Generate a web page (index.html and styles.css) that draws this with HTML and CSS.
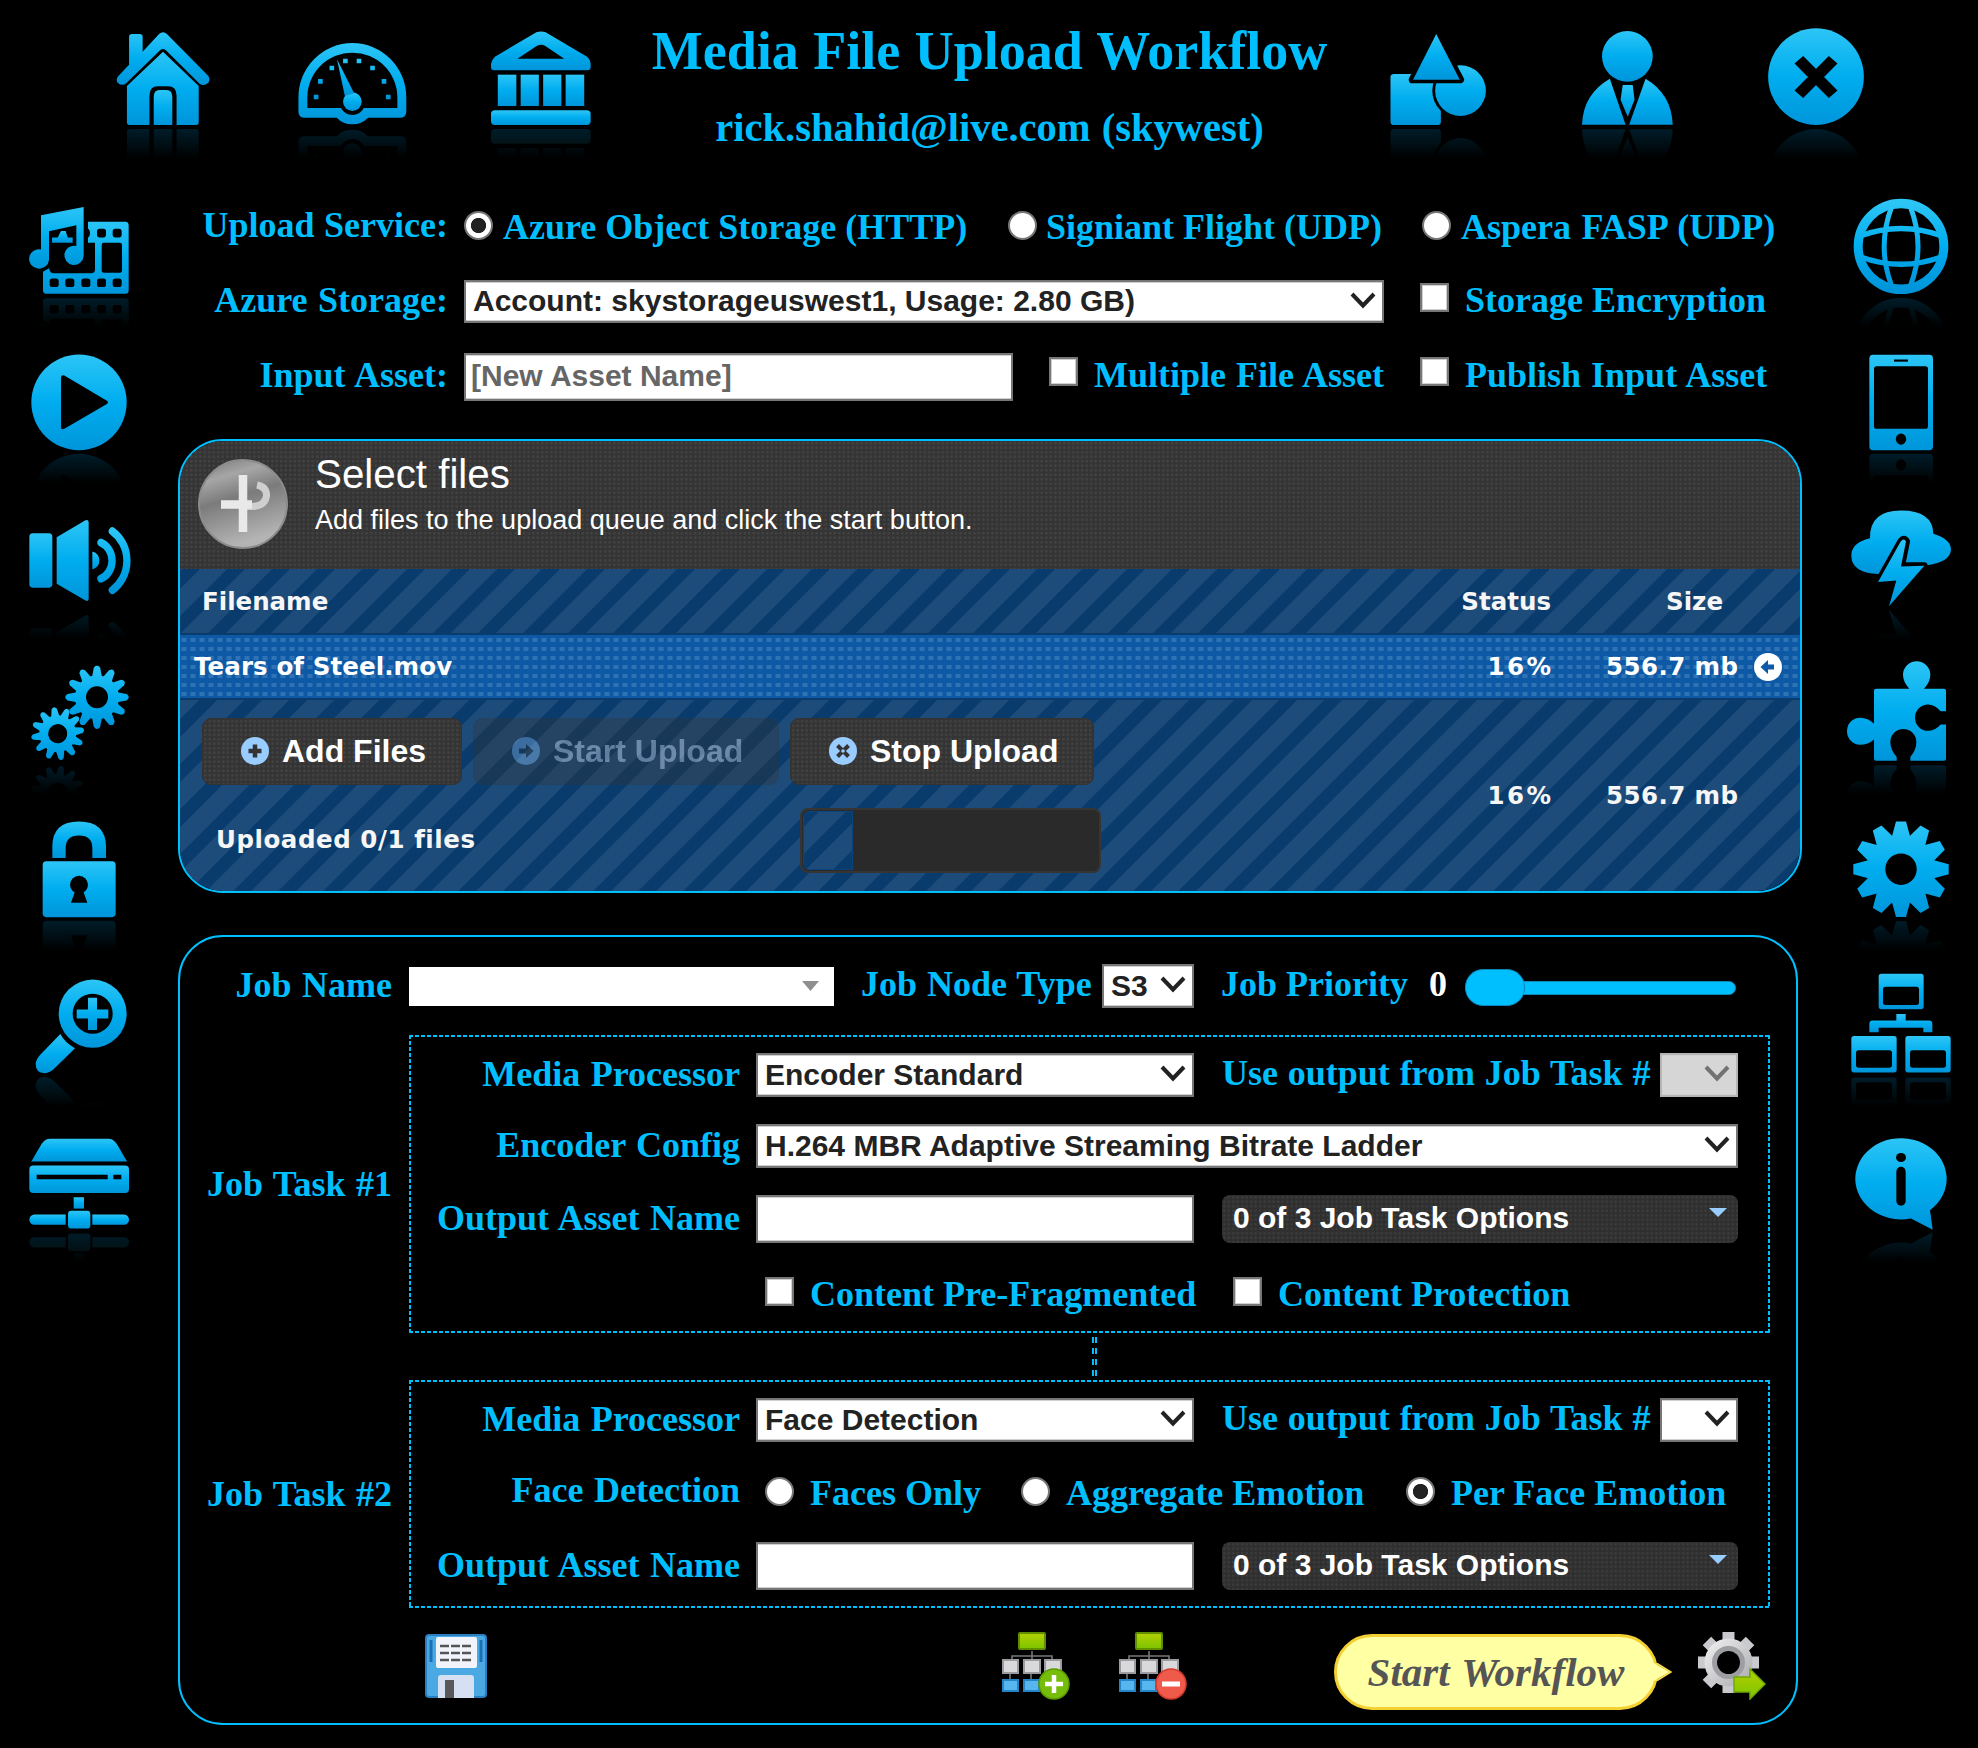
FILE: index.html
```html
<!DOCTYPE html>
<html lang="en">
<head>
<meta charset="utf-8">
<title>Media File Upload Workflow</title>
<link rel="stylesheet" href="styles.css">
</head>
<body>
<svg class="defs" width="0" height="0" aria-hidden="true">
  <defs>
    <linearGradient id="sky" x1="0" y1="0" x2="0" y2="1"><stop offset="0" stop-color="#2cc5f6"/><stop offset=".5" stop-color="#00adef"/><stop offset="1" stop-color="#0095da"/></linearGradient>
    <linearGradient id="steel" x1="0" y1="0" x2="1" y2="1"><stop offset="0" stop-color="#f2f2f2"/><stop offset="1" stop-color="#a9a9ad"/></linearGradient>
    <linearGradient id="lime" x1="0" y1="0" x2="0" y2="1"><stop offset="0" stop-color="#b4d000"/><stop offset="1" stop-color="#7cc400"/></linearGradient>
    <polygon id="spoke" points="-5,-47.7 5,-47.7 9,-33 9,33 5,47.7 -5,47.7 -9,33 -9,-33"/>
    <g id="spokes">
      <use href="#spoke"/><use href="#spoke" transform="rotate(30)"/><use href="#spoke" transform="rotate(60)"/><use href="#spoke" transform="rotate(90)"/><use href="#spoke" transform="rotate(120)"/><use href="#spoke" transform="rotate(150)"/>
    </g>
    <path id="cog" d="M-3.2 -29.5 Q0 -34 3.2 -29.5 L5 -20 V20 L3.2 29.5 Q0 34 -3.2 29.5 L-5 20 V-20Z"/>
    <g id="cogs">
      <use href="#cog"/><use href="#cog" transform="rotate(30)"/><use href="#cog" transform="rotate(60)"/><use href="#cog" transform="rotate(90)"/><use href="#cog" transform="rotate(120)"/><use href="#cog" transform="rotate(150)"/>
      <circle r="22"/>
    </g>
    <mask id="gear-mask" maskUnits="userSpaceOnUse" x="0" y="0" width="110" height="110">
      <g transform="translate(55 60.2)" fill="#fff"><use href="#spokes"/><circle r="34"/><circle r="15.7" fill="#000"/></g>
    </mask>
    <mask id="cog-big" maskUnits="userSpaceOnUse" x="0" y="0" width="110" height="110">
      <g transform="translate(73 44.3)" fill="#fff"><use href="#cogs"/><circle r="11" fill="#000"/></g>
    </mask>
    <mask id="cog-small" maskUnits="userSpaceOnUse" x="0" y="0" width="110" height="110">
      <g transform="translate(33.7 80.7) rotate(-8) scale(.84)" fill="#fff"><use href="#cogs"/><circle r="11.4" fill="#000"/></g>
    </mask>
    <symbol id="chevron" viewBox="0 0 26 18"><path d="M2 2 L13 13.5 L24 2" fill="none" stroke="#222" stroke-width="4"/></symbol>
    <symbol id="flow" viewBox="0 0 68 68">
      <path d="M30 19v6M10 28v-4H50v4M30 24v5" fill="none" stroke="#777" stroke-width="1.6"/>
      <path d="M8 42v6M29 42v6" stroke="#777" stroke-width="1.6"/>
      <rect x="17" y="1" width="26" height="16" rx="1" fill="url(#lime)" stroke="#5f8f00" stroke-width="2"/>
      <g fill="#d9d9dc" stroke="#9c9ca0" stroke-width="2"><rect x="1" y="28" width="15" height="13"/><rect x="22" y="28" width="16" height="13"/><rect x="43" y="28" width="16" height="13"/></g>
      <g fill="#58b6ee" stroke="#2484c8" stroke-width="2"><rect x="1" y="48" width="15" height="11"/><rect x="22" y="48" width="15" height="11"/></g>
    </symbol>
  </defs>
</svg>

<header class="masthead">
  <a class="nav-icon"><svg class="glyph" viewBox="51 49 308 330" preserveAspectRatio="none" fill="url(#sky)"><path d="M110 108q0-8 8-8h22q8 0 8 8v45l46-53q11-11 22 0l116 126q6 10 0 20-12 12-24 4L216 152q-11-14-22 0l-92 96q-12 10-24-2-6-10 2-20l30-34z"/><path d="M205 153 305 256V366q0 7-7 7H243V285q0-28-24-28h-28q-24 0-24 28V373H111q-7 0-7-7V256z"/><path d="M179 373V290q0-22 16-22h20q16 0 16 22v83z"/></svg></a>
  <a class="nav-icon"><svg class="glyph" viewBox="579 49 308 330" preserveAspectRatio="none" fill="url(#sky)"><path fill-rule="evenodd" d="M583 290A151 163 0 0 1 885 290V333q0 18-18 18H778Q760 371 734 371T690 351H601q-18 0-18-18zM608 322V290A126 134 0 0 1 860 290V322H766Q755 343 734 343T702 322z"/><ellipse cx="734" cy="303" rx="26" ry="28"/><path d="M691 176 739 278 713 286z"/><path d="M626 282h13v14h-13zM638 235h13v14h-13zM670 195h13v14h-13zM708 174h13v14h-13zM746 174h13v14h-13zM784 195h13v14h-13zM816 235h13v14h-13zM828 282h13v14h-13z"/></svg></a>
  <a class="nav-icon"><svg class="glyph" viewBox="1109 49 308 330" preserveAspectRatio="none" fill="url(#sky)"><path fill-rule="evenodd" d="M1250 95q13-5 26 0l116 73q10 10 10 22v10q0 9-9 9H1132q-9 0-9-9V190q1-12 11-22zM1252 135q11-6 22 0l54 39H1197z"/><rect x="1142" y="222" width="52" height="94"/><rect x="1206" y="222" width="51" height="94"/><rect x="1269" y="222" width="51" height="94"/><rect x="1332" y="222" width="52" height="94"/><rect x="1123" y="329" width="279" height="44" rx="11"/></svg></a>
  <div class="titles">
    <h1>Media File Upload Workflow</h1>
    <h2>rick.shahid@live.com (skywest)</h2>
  </div>
  <a class="nav-icon"><svg class="glyph" viewBox="64 49 308 330" preserveAspectRatio="none" fill="url(#sky)"><rect x="85" y="220" width="141" height="153" rx="10"/><ellipse cx="281" cy="270" rx="79" ry="84" fill="#000"/><ellipse cx="281" cy="270" rx="71" ry="76"/><path d="M213 100 280 237H147z" fill="#000" stroke="#000" stroke-width="22" stroke-linejoin="round"/><path d="M213 100 279 237H148z"/></svg></a>
  <a class="nav-icon"><svg class="glyph" viewBox="593 49 308 330" preserveAspectRatio="none" fill="url(#sky)"><ellipse cx="748" cy="167" rx="71" ry="76"/><path d="M699 234 743 372H621Q624 280 699 234z"/><path d="M799 234 753 372H875Q872 280 799 234z"/><path d="M735 253H763L768 297 749 348 729 297z"/></svg></a>
  <a class="nav-icon"><svg class="glyph" viewBox="1123 49 308 330" preserveAspectRatio="none" fill="url(#sky)"><ellipse cx="1277" cy="228" rx="134" ry="145"/><path d="M1229 177 1325 281M1325 177 1229 281" stroke="#000" stroke-width="33"/></svg></a>
</header>

<div class="layout">
  <nav class="rail">
    <a class="nav-icon"><svg class="glyph" viewBox="72 -12 330 308" preserveAspectRatio="none" fill="url(#sky)"><path fill-rule="evenodd" d="M264 88H376q10 0 10 10V280q0 10-10 10H139q-10 0-10-10V228l18-10q3 14 13 14H275q10 0 10-10V147H264v-14q6-3 6-13t-6-13zM311 147q-6 0-6 6v72q0 6 6 6h49q6 0 6-6v-72q0-6-6-6z"/><path d="M156 132H173L183 114H197L203 132H218V147H156z"/><path d="M123 70 251 47V184A29 27 0 1 1 229 156V98L147 115V195A30 27 0 1 1 123 166z"/><g fill="#000"><rect x="149" y="247" width="27" height="24" rx="8"/><rect x="196" y="247" width="27" height="24" rx="8"/><rect x="244" y="247" width="27" height="24" rx="8"/><rect x="291" y="247" width="27" height="24" rx="8"/><rect x="338" y="247" width="27" height="24" rx="8"/><rect x="291" y="108" width="27" height="24" rx="8"/><rect x="338" y="108" width="27" height="24" rx="8"/></g></svg></a>
    <a class="nav-icon"><svg class="glyph" viewBox="72 425 330 308" preserveAspectRatio="none" fill="url(#sky)"><ellipse cx="237" cy="594" rx="143" ry="134"/><path fill="#000" d="M183 525q0-9 10-6l129 71q4 4 0 8l-129 70q-10 4-10-5z"/></svg></a>
    <a class="nav-icon"><svg class="glyph" viewBox="72 862 330 308" preserveAspectRatio="none" fill="url(#sky)"><rect x="88" y="961" width="69" height="152" rx="10"/><path d="M170 972 255 925q11-4 11 7V1143q0 11-11 5L170 1102z"/><path d="M277 1012q21 6 21 25t-21 25z"/><path d="M303 987A55 55 0 0 1 303 1088M337 955A99.700 99.700 0 0 1 337 1120" fill="none" stroke="url(#sky)" stroke-width="22" stroke-linecap="round"/></svg></a>
    <a class="nav-icon"><svg class="glyph" viewBox="0 0 110 110"><rect x="7" y="54" width="53.400" height="53.400" fill="url(#sky)" mask="url(#cog-small)"/><rect x="41" y="12.500" width="64" height="64" fill="url(#sky)" mask="url(#cog-big)"/></svg></a>
    <a class="nav-icon"><svg class="glyph" viewBox="72 201 330 319.400" preserveAspectRatio="none" fill="url(#sky)"><path d="M157 343V310Q157 237 237 237T318 310V343H277V315Q277 278 237 278T197 315V343z"/><rect x="128" y="353" width="219" height="162" rx="11"/><g fill="#000"><ellipse cx="237" cy="421" rx="27" ry="26"/><path d="M226 438 213 473H262L249 438z"/></g></svg></a>
    <a class="nav-icon"><svg class="glyph" viewBox="72 653.600 330 319.400" preserveAspectRatio="none" fill="url(#sky)"><ellipse cx="278" cy="795" rx="102" ry="99"/><ellipse cx="278" cy="795" rx="60" ry="58" fill="#000"/><path d="M264 749h27v34h34v26h-34v33h-27v-33h-34v-26h34z"/><path d="M181 854Q195 880 225 895L160 957Q145 968 133 968 107 966 107 940 108 928 120 915z"/></svg></a>
    <a class="nav-icon"><svg class="glyph" viewBox="72 1105.600 330 319.400" preserveAspectRatio="none" fill="url(#sky)"><path d="M94 1223 125 1172Q135 1157 150 1157H325Q340 1157 350 1172L381 1223z"/><rect x="88" y="1235" width="299" height="80" rx="12"/><rect x="221" y="1327" width="31" height="33"/><rect x="204" y="1366" width="67" height="52" rx="10"/><path d="M197 1377H103a15 15 0 0 0 0 30H197z"/><path d="M277 1377H372a15 15 0 0 1 0 30H277z"/><path fill="#000" d="M110 1262H323V1275H110zM340 1262H364V1275H340z"/></svg></a>
  </nav>

  <main class="content">
    <form class="settings">
      <div class="row">
        <span class="label service">Upload Service:</span>
        <label class="option opt-azure"><input type="radio" name="service" checked><span>Azure Object Storage (HTTP)</span></label>
        <label class="option opt-signiant"><input type="radio" name="service"><span>Signiant Flight (UDP)</span></label>
        <label class="option opt-aspera"><input type="radio" name="service"><span>Aspera FASP (UDP)</span></label>
      </div>
      <div class="row row-storage">
        <span class="label">Azure Storage:</span>
        <div class="select storage">Account: skystorageuswest1, Usage: 2.80 GB)<svg><use href="#chevron"/></svg></div>
        <label class="check"><input type="checkbox"><span>Storage Encryption</span></label>
      </div>
      <div class="row row-asset">
        <span class="label">Input Asset:</span>
        <input class="field asset" type="text" placeholder="[New Asset Name]">
        <label class="check"><input type="checkbox"><span>Multiple File Asset</span></label>
        <label class="check last"><input type="checkbox"><span>Publish Input Asset</span></label>
      </div>
    </form>

    <section class="uploader">
      <div class="up-head">
        <svg class="up-logo" viewBox="0 0 90 90">
          <defs><linearGradient id="disc" x1="0" y1="0" x2=".3" y2="1"><stop offset="0" stop-color="#777"/><stop offset=".25" stop-color="#a6a6a6"/><stop offset=".5" stop-color="#7b7b7b"/><stop offset="1" stop-color="#b4b4b4"/></linearGradient></defs>
          <circle cx="45" cy="45" r="44" fill="url(#disc)" stroke="#8c8c8c" stroke-width="2"/>
          <path d="M59 26Q69 28 68.500 37 67 47 54 47.500H45" fill="none" stroke="#cfcfcf" stroke-width="7"/>
          <path d="M45 16V73M23 45.500H54" fill="none" stroke="#e9e9e9" stroke-width="8.500"/>
        </svg>
        <div><h3>Select files</h3><p>Add files to the upload queue and click the start button.</p></div>
      </div>
      <div class="up-row up-columns"><span>Filename</span><span class="num">Status</span><span class="num size">Size</span></div>
      <div class="up-row up-file"><span>Tears of Steel.mov</span><span class="num percent">16%</span><span class="num amount">556.7 mb</span>
        <svg class="badge" viewBox="0 0 28 28"><circle cx="14" cy="14" r="14" fill="#fff"/><path d="M6.500 14 14 7v4.500h6v5h-6V21z" fill="#0d5aa7"/></svg>
      </div>
      <div class="up-row up-foot">
        <div class="up-actions">
          <div class="buttons">
            <button type="button" class="btn add"><svg viewBox="0 0 28 28"><circle cx="14" cy="14" r="14" fill="#9cf"/><path d="M14 7.500v13M7.500 14h13" stroke="#333" stroke-width="4.500"/></svg>Add Files</button>
            <button type="button" class="btn start"><svg viewBox="0 0 28 28"><circle cx="14" cy="14" r="14" fill="#9cf"/><path d="M21.500 14 14 7v4.500H7v5h7V21z" fill="#333"/></svg>Start Upload</button>
            <button type="button" class="btn stop"><svg viewBox="0 0 28 28"><circle cx="14" cy="14" r="14" fill="#9cf"/><path d="M8.500 8.500l11 11M19.500 8.500l-11 11" stroke="#333" stroke-width="4"/><circle cx="14" cy="14" r="1.800" fill="#9cf"/></svg>Stop Upload</button>
          </div>
          <div class="progress-line"><span class="uploaded">Uploaded 0/1 files</span><div class="progress"><div class="bar" style="width:17%"></div></div></div>
        </div>
        <span class="num percent">16%</span><span class="num amount">556.7 mb</span>
      </div>
    </section>

    <section class="job">
      <div class="job-row">
        <span class="label name">Job Name</span>
        <div class="combo"><svg viewBox="0 0 17 10"><path d="M0 0H17L8.500 10z" fill="#8f8f8f"/></svg></div>
        <span class="node-type">Job Node Type</span>
        <div class="select node">S3<svg><use href="#chevron"/></svg></div>
        <span class="priority">Job Priority</span><span class="priority-value">0</span>
        <div class="slider"><div class="track"></div><div class="handle"></div></div>
      </div>

      <div class="task">
        <span class="label name">Job Task #1</span>
        <div class="task-box">
          <div class="row">
            <span class="label">Media Processor</span>
            <div class="select wide">Encoder Standard<svg><use href="#chevron"/></svg></div>
            <span class="use-output">Use output from Job Task #</span>
            <div class="select source disabled"><svg><use href="#chevron"/></svg></div>
          </div>
          <div class="row encoder">
            <span class="label">Encoder Config</span>
            <div class="select full">H.264 MBR Adaptive Streaming Bitrate Ladder<svg><use href="#chevron"/></svg></div>
          </div>
          <div class="row output">
            <span class="label">Output Asset Name</span>
            <input class="field wide" type="text">
            <div class="multi">0 of 3 Job Task Options<svg viewBox="0 0 18 9"><path d="M0 0H18L9 9z" fill="#9cf"/></svg></div>
          </div>
          <div class="row flags">
            <label class="check fragmented"><input type="checkbox"><span>Content Pre-Fragmented</span></label>
            <label class="check"><input type="checkbox"><span>Content Protection</span></label>
          </div>
        </div>
      </div>
      <div class="link"></div>
      <div class="task second">
        <span class="label name">Job Task #2</span>
        <div class="task-box">
          <div class="row">
            <span class="label">Media Processor</span>
            <div class="select wide">Face Detection<svg><use href="#chevron"/></svg></div>
            <span class="use-output">Use output from Job Task #</span>
            <div class="select source"><svg><use href="#chevron"/></svg></div>
          </div>
          <div class="row faces">
            <span class="label">Face Detection</span>
            <label class="option faces-only"><input type="radio" name="faces"><span>Faces Only</span></label>
            <label class="option aggregate"><input type="radio" name="faces"><span>Aggregate Emotion</span></label>
            <label class="option"><input type="radio" name="faces" checked><span>Per Face Emotion</span></label>
          </div>
          <div class="row output">
            <span class="label">Output Asset Name</span>
            <input class="field wide" type="text">
            <div class="multi">0 of 3 Job Task Options<svg viewBox="0 0 18 9"><path d="M0 0H18L9 9z" fill="#9cf"/></svg></div>
          </div>
        </div>
      </div>

      <div class="toolbar">
        <svg class="save" viewBox="0 0 62 64">
          <rect x="1" y="1" width="60" height="62" rx="3" fill="#4aa8e2" stroke="#2a7fc0" stroke-width="2"/>
          <path d="M6 6V28M56 6V28" stroke="#1c6fb5" stroke-width="3"/>
          <rect x="11" y="3" width="41" height="31" rx="2" fill="#f1f4fa"/>
          <path d="M15 12H47M15 19H47M15 26H47" stroke="#555" stroke-width="2.500" stroke-dasharray="9 2"/>
          <path d="M13 64V44q0-3 3-3H46q3 0 3 3V64z" fill="#d5e0f3"/><path d="M20 64V46H29V64z" fill="#56585c"/>
        </svg>
        <svg class="task-add" viewBox="0 0 68 68"><use href="#flow"/><circle cx="52" cy="52" r="15" fill="#76bd0b" stroke="#5a9a00" stroke-width="1.500"/><path d="M52 43v18M43 52h18" stroke="#fff" stroke-width="4.500"/></svg>
        <svg class="task-remove" viewBox="0 0 68 68"><use href="#flow"/><circle cx="52" cy="52" r="15" fill="#f05a4a" stroke="#d43a2c" stroke-width="1.500"/><path d="M43 52h18" stroke="#fff" stroke-width="5"/></svg>
        <div class="hint">Start Workflow<svg viewBox="0 0 18 18"><path d="M0 0 16 9 0 18z" fill="#ffffa3"/><path d="M2 0 16.500 9 2 18" fill="none" stroke="#f7dc4e" stroke-width="2"/></svg></div>
        <svg class="run" viewBox="0 0 68 68">
          <g transform="translate(30.500 30.500)"><g stroke="#c9cacd" stroke-width="12"><path d="M0-30.500V30.500M-30.500 0H30.500"/><path transform="rotate(45)" d="M0-30.500V30.500M-30.500 0H30.500"/></g><circle r="24" fill="url(#steel)"/><circle r="14" fill="none" stroke="#9d9ea2" stroke-width="5"/><circle r="11.500" fill="#000"/></g>
          <path d="M36 45H52V37L67 52 52 67V60H36z" fill="url(#lime)" stroke="#6fa800" stroke-width="1.500"/>
        </svg>
      </div>
    </section>
  </main>

  <nav class="rail right">
    <a class="nav-icon"><svg class="glyph" viewBox="108 17 330 308" preserveAspectRatio="none" fill="none" stroke="url(#sky)"><ellipse cx="273" cy="186" rx="128.500" ry="120" stroke-width="27"/><path d="M245 75Q200 186 245 297M301 75Q347 186 301 297M150 157Q273 115 396 157M150 215Q273 257 396 215" stroke-width="15"/></svg></a>
    <a class="nav-icon"><svg class="glyph" viewBox="108 454 330 308" preserveAspectRatio="none" fill="url(#sky)"><rect x="178" y="490" width="191" height="267" rx="11"/><g fill="#000"><rect x="192" y="522" width="162" height="175" rx="8"/><rect x="252" y="503" width="42" height="6"/><circle cx="273" cy="726" r="15.500"/></g></svg></a>
    <a class="nav-icon"><svg class="glyph" viewBox="108 890 330 308" preserveAspectRatio="none" fill="url(#sky)"><path d="M180 1003Q178 925 273 925T370 990Q423 1005 423 1035 420 1070 352 1078L205 1103Q124 1100 124 1052 124 1015 180 1003z"/><path d="M272 1012Q282 1000 290 1012L275 1080H343L237 1193 259 1121 204 1125z" stroke="#000" stroke-width="20" stroke-linejoin="round" fill="#000"/><path d="M272 1012Q282 1000 288 1012L273 1082 343 1080 237 1193 259 1121 204 1125z"/></svg></a>
    <a class="nav-icon"><svg class="glyph" viewBox="108 1324 330 308" preserveAspectRatio="none" fill="url(#sky)"><path d="M192 1430q0-6 6-6H298Q279 1405 279 1385A41 38 0 1 1 361 1385Q361 1405 342 1424H402q6 0 6 6V1487H392Q375 1468 354 1468A39 37 0 1 0 354 1542Q375 1542 392 1524H408V1620q0 6-6 6H301V1615Q319 1595 319 1573A39 36 0 1 0 241 1573Q241 1595 260 1615V1626H198q-6 0-6-6V1566Q175 1581 150 1581A39 38 0 1 1 150 1505Q175 1505 192 1522z"/></svg></a>
    <a class="nav-icon"><svg class="glyph" viewBox="0 0 110 110"><rect x="7" y="12" width="96" height="96" fill="url(#sky)" mask="url(#gear-mask)"/></svg></a>
    <a class="nav-icon"><svg class="glyph" viewBox="108 653.600 330 319.400" preserveAspectRatio="none" fill="url(#sky)"><rect x="206" y="679" width="135" height="103" rx="8"/><path d="M259 796h28v19h70q10 0 10 10v24h-27v-13H206v13h-28v-24q0-10 10-10h71z"/><rect x="124" y="860" width="136" height="106" rx="8"/><rect x="286" y="860" width="136" height="106" rx="8"/><g fill="#000"><rect x="219" y="717" width="108" height="53" rx="8"/><rect x="138" y="901" width="108" height="51" rx="8"/><rect x="300" y="901" width="108" height="51" rx="8"/></g></svg></a>
    <a class="nav-icon"><svg class="glyph" viewBox="108 1107 330 319.400" preserveAspectRatio="none" fill="url(#sky)"><path d="M360 1366A137 118 0 1 0 303 1390L368 1423z"/><g fill="#000"><ellipse cx="273" cy="1213" rx="15" ry="13"/><rect x="259" y="1240" width="28" height="113" rx="14"/></g></svg></a>
  </nav>
</div>
</body>
</html>
```

FILE: styles.css
```css
* { box-sizing: border-box; }

body {
  margin: 0;
  width: 1978px;
  height: 1748px;
  overflow: hidden;
  background: #000;
  color: #00bfff;
  font: bold 36px/40px "Liberation Serif", serif;
  white-space: nowrap;
}

h1, h2, h3, p { margin: 0; }
svg { display: block; flex: none; }
.defs { position: absolute; }

/* Header and icon rails */
.masthead {
  display: grid;
  grid-template-columns: repeat(3, 189px) 1fr repeat(3, 189px);
  height: 155px;
  padding: 0 67.5px 0 68.5px;
}
.masthead .nav-icon { height: 127px; }
.titles { text-align: center; padding-top: 21px; }
h1 { font-size: 54px; line-height: 60px; word-spacing: 1px; }
h2 { font-size: 40.5px; line-height: 46px; margin-top: 24px; word-spacing: 1px; }

.nav-icon { display: flex; justify-content: center; align-items: flex-end; }
.glyph {
  width: 110px;
  height: 110px;
  -webkit-box-reflect: below 0 linear-gradient(to top, rgba(0, 0, 0, .2), transparent 31px);
}

.layout { display: flex; }
.rail { width: 158px; flex: none; }
.rail.right { width: 154px; }
.rail .nav-icon { height: 155.8px; }
.rail .nav-icon:first-child { height: 141px; }
.content { width: 1624px; margin: 0 22px 0 20px; flex: none; }

/* Form primitives */
.row { display: flex; align-items: center; height: 50px; }
.label { width: 270px; text-align: right; flex: none; margin-right: 16px; word-spacing: 1.5px; }

input[type="radio"], input[type="checkbox"] {
  appearance: none;
  flex: none;
  width: 29px;
  height: 29px;
  margin: 0;
  background: #fff;
  border: 2px solid #767676;
}
input[type="radio"] { border-radius: 50%; border-width: 2.5px; }
input[type="radio"]:checked { background: radial-gradient(circle, #222 7.2px, #fff 8px); }
input[type="checkbox"] { box-shadow: inset 0 0 0 1px #d0d0d0; }

.option, .check { display: flex; align-items: center; flex: none; }
.option input { margin-right: 10px; }
.option span { margin-top: 4px; }
.check input { margin-right: 16px; }

.select, .field {
  flex: none;
  font: bold 30px/39px "Liberation Sans", Arial, sans-serif;
  color: #222;
  background: #fff;
  border: 2px solid #767676;
  box-shadow: inset 0 -1px 0 #d0d0d0, inset 0 1px 0 #d0d0d0;
}
.select { display: flex; align-items: center; height: 44px; padding: 0 6px 2px 7px; }
.select svg { width: 26px; height: 18px; margin: 0 0 0 auto; }
.select.disabled { background: #d6d6d6; border-color: #b5b5b5; }
.select.disabled svg { opacity: .55; }
.field { height: 48px; padding: 0 5px 3px; margin: 0; border-radius: 0; }
.field::placeholder { color: #666; opacity: 1; }
.wide { width: 438px; }

/* Upload settings */
.settings { padding-top: 45px; }
.settings .row + .row { margin-top: 26px; }
.service { word-spacing: .5px; }
.opt-azure { width: 544px; }
.opt-signiant { width: 414px; }
.opt-signiant input { margin-right: 9px; }
.opt-aspera { word-spacing: 1.5px; }
.storage { width: 920px; height: 43px; margin-right: 36px; padding-bottom: 1px; }
.row-storage .label { margin-top: -3px; }
.row-storage .check input { margin-top: -8px; }
.row-storage .check span { margin-top: -2px; }
.asset { width: 549px; margin-right: 36px; }
.row-asset .label { margin-top: -4px; }
.row-asset .check input { margin-top: -11px; }
.row-asset .check span { margin-top: -5px; word-spacing: 1px; }
.row-asset .check { width: 371px; }

/* Upload queue */
.uploader {
  margin-top: 37px;
  height: 454px;
  border: 2px solid #00bfff;
  border-radius: 45px;
  overflow: hidden;
  color: #f6f6f6;
  font: bold 24.5px/30px Verdana, "DejaVu Sans", sans-serif;
}
.up-head, .btn {
  background: #343434 radial-gradient(circle at 50% 50%, #424242 1.1px, transparent 1.6px) 0 0 / 4.5px 4.5px;
}
.up-head {
  display: flex;
  height: 128px;
  padding: 18px 0 0 18px;
  color: #fff;
  font: 27px/32px "Liberation Sans", Arial, sans-serif;
}
.up-logo { width: 90px; height: 90px; margin-right: 27px; }
h3 { font: 40.3px/46px "Liberation Sans", Arial, sans-serif; margin: -7px 0 6px; }

.up-row { display: grid; grid-template-columns: 1fr 160px 188px 61px; align-items: center; }
.num { text-align: right; }
.percent { letter-spacing: 2.4px; margin-right: -2.4px; }
.amount { letter-spacing: .4px; padding-right: .6px; }
.up-columns, .up-foot, .bar {
  background-image: linear-gradient(135deg, #1d4c7b 29.5%, #0a3b6d 29.5% 50%, #1d4c7b 50% 79.5%, #0a3b6d 79.5%);
  background-size: 45px 45px;
}
.up-columns {
  height: 66px;
  padding: 1px 0 0 22px;
  background-position: 20.5px 0;
  border-bottom: 2px solid #0a3b6d;
}
.up-columns .size { padding-right: 16px; }
.up-file {
  height: 63px;
  padding-left: 14px;
  color: #fff;
  letter-spacing: .1px;
  background: conic-gradient(from 90deg at 4.5px 4.5px, #0d59a5 270deg, #3073b4 0) 6.5px 3px / 9px 9px;
}
.badge { width: 28px; height: 28px; margin-left: 15px; }
.up-foot {
  height: 193px;
  border-top: 2px solid #0a3b6d;
  background-position: -7.3px 0;
}
.up-actions { align-self: start; padding: 18px 0 0 22px; }
.buttons { display: flex; }
.btn {
  display: flex;
  align-items: center;
  height: 67px;
  border: 1px solid #333;
  border-radius: 9px;
  padding: 0 0 2px 38px;
  margin: 0 11px 0 0;
  color: #fff;
  font: bold 32px/40px "Liberation Sans", Arial, sans-serif;
}
.btn svg { width: 28px; height: 28px; margin: 0 13px 0 0; }
.add { width: 260px; }
.start { width: 306px; opacity: .35; background-image: none; }
.stop { width: 304px; }
.progress-line { display: flex; align-items: center; margin-top: 23px; }
.uploaded { width: 584px; padding-left: 14px; margin: -1px 14px 0 0; letter-spacing: .55px; }
.progress {
  width: 301px;
  height: 65px;
  padding: 1px;
  background: #2a2a2a;
  border: 2px solid #353535;
  border-radius: 8px;
}
.bar { height: 100%; border: 1.5px solid #0b447c; border-radius: 6px 0 0 6px; background-position: 15px 0; }

/* Job definition */
.job {
  width: 1620px;
  height: 790px;
  margin-top: 42px;
  padding-top: 24px;
  border: 2px solid #00bfff;
  border-radius: 45px;
}
.job-row { display: flex; align-items: center; height: 50px; }
.label.name { width: 212px; margin-right: 17px; }
.job-row .label.name { margin-top: -2px; }
.combo { width: 425px; height: 39px; background: #fff; padding: 14px 15px 0 0; display: flex; justify-content: flex-end; }
.combo svg { width: 17px; height: 10px; }
.node-type { width: 241px; margin: -4px 0 0 27px; word-spacing: 1px; }
.node { width: 92px; }
.priority { width: 208px; margin: -4px 0 0 27px; }
.priority-value { width: 36px; color: #fff; margin-top: -4px; }
.slider { display: grid; align-items: center; width: 271px; margin-top: 3px; }
.slider > * { grid-area: 1 / 1; }
.track { height: 14px; border-radius: 7px; background: #00bfff; border: 1px solid #0b86b8; }
.handle { width: 60px; height: 37px; border-radius: 18px; background: #00bfff; border: 1px solid #0b86b8; }

.task { display: flex; align-items: center; margin-top: 24px; }
.task.second { margin-top: 0; }
.task-box {
  width: 1361px;
  height: 298px;
  padding: 15px 2px 0;
  background:
    repeating-linear-gradient(90deg, #00bfff 0 4px, transparent 4px 6px) top / 100% 2px no-repeat,
    repeating-linear-gradient(90deg, #00bfff 0 4px, transparent 4px 6px) bottom / 100% 2px no-repeat,
    repeating-linear-gradient(#00bfff 0 4px, transparent 4px 6px) left / 2px 100% no-repeat,
    repeating-linear-gradient(#00bfff 0 4px, transparent 4px 6px) right / 2px 100% no-repeat;
}
.second .task-box { height: 228px; }
.task-box .label { width: 329px; margin-right: 16px; margin-top: -2px; }
.task-box .row + .row { margin-top: 22px; }
.task-box .row.encoder, .task-box .row.faces { margin-top: 21px; }
.task-box .encoder + .output { margin-top: 23px; }
.task-box .faces + .output { margin-top: 25px; }
.use-output { width: 438px; margin: -4px 0 0 28px; word-spacing: .8px; }
.source { width: 78px; }
.full { width: 982px; }
.multi {
  display: flex;
  justify-content: space-between;
  width: 516px;
  height: 48px;
  margin-left: 28px;
  padding: 0 11px 0 11px;
  border-radius: 8px;
  color: #fff;
  background: #2f2f2f radial-gradient(circle, #3b3b3b 1.1px, transparent 1.6px) 0 0 / 4.5px 4.5px;
  font: bold 30px/46px "Liberation Sans", Arial, sans-serif;
}
.multi svg { width: 18px; height: 9px; margin-top: 13px; }
.flags { padding-left: 354px; }
.flags .check input, .faces .option input { margin-right: 16px; }
.flags .check span { margin-top: 6px; }
.fragmented { width: 468px; }
.faces .option:nth-child(2) { margin-left: 9px; }
.faces-only { width: 256px; }
.aggregate { width: 385px; }
.faces .option span { margin-top: 4px; }
.link {
  width: 5px;
  height: 39px;
  margin: 4px 0 4px 912px;
  border: dashed #00bfff;
  border-width: 0 2px;
}

.toolbar { display: flex; align-items: flex-start; padding: 24px 0 0 245px; }
.save { width: 62px; height: 64px; margin-top: 2px; }
.task-add { width: 68px; height: 68px; margin-left: 515px; }
.task-remove { width: 68px; height: 68px; margin-left: 49px; }
.hint {
  position: relative;
  width: 324px;
  height: 76px;
  margin: 2px 40px 0 147px;
  border: 3px solid #f5d033;
  border-radius: 38px;
  background: #ffffa3;
  color: #555;
  text-align: center;
  font-style: italic;
  font-size: 41px;
  line-height: 70px;
  word-spacing: 2px;
}
.hint svg { position: absolute; left: 317px; top: 26px; width: 18px; height: 18px; }
.run { width: 68px; height: 68px; }
```
